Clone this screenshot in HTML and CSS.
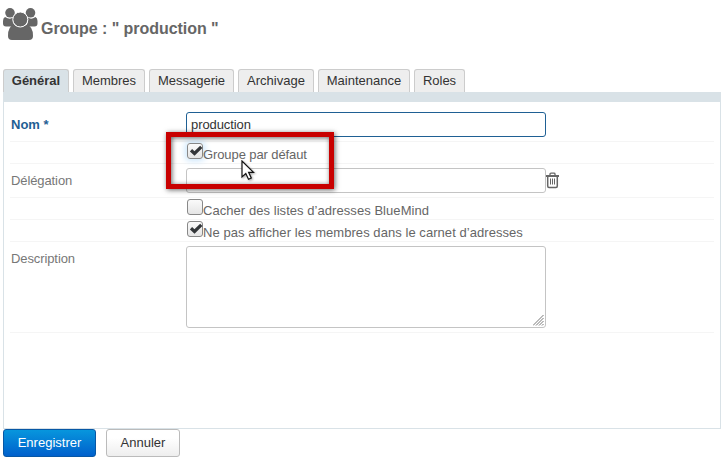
FILE: index.html
```html
<!DOCTYPE html>
<html lang="fr">
<head>
<meta charset="utf-8">
<title>Groupe</title>
<link rel="stylesheet" href="styles.css">
</head>
<body>
<header class="header">
  <svg class="group-icon" width="35" height="33" viewBox="0 0 35 33" fill="#666">
    <circle cx="7" cy="4.800" r="4.800"/><circle cx="27.500" cy="4.800" r="4.800"/>
    <path d="M2 9 Q7 12 10 9.500 Q9 15 13 18.500 H3 Q0 18.500 0 15.500 V13 Q0 10 2 9Z"/>
    <path d="M32.500 9 Q28 12 25 9.500 Q26 15 22 18.500 H31.500 Q34.500 18.500 34.500 15.500 V13 Q34.500 10 32.500 9Z"/>
    <path d="M11 17 Q17.300 21 23.500 17 Q30 18 30 28 Q30 32 26 32 H9 Q5 32 5 28 Q5 18 11 17Z"/>
    <circle cx="17.300" cy="11.500" r="7.500" stroke="#fff" stroke-width="1"/>
  </svg>
  <h1 class="title">Groupe : " production "</h1>
</header>
<nav class="tabs">
  <a class="tab tab-general active">Général</a>
  <a class="tab tab-membres">Membres</a>
  <a class="tab tab-messagerie">Messagerie</a>
  <a class="tab tab-archivage">Archivage</a>
  <a class="tab tab-maintenance">Maintenance</a>
  <a class="tab tab-roles">Roles</a>
</nav>
<main class="panel">
  <div class="row row-name"><span class="label required">Nom *</span><div class="field focused">production</div></div>
  <div class="row row-check"><span class="label"></span><span class="check glow"><svg width="16" height="16" viewBox="0 0 16 16"><path d="M4 7.300 L7.500 10.500 L14.300 3.800" fill="none" stroke="#333639" stroke-width="3.200"/></svg></span><span class="check-text default-text">Groupe par défaut</span></div>
  <div class="row row-delegation"><span class="label">Délégation</span><div class="field"></div>
    <svg class="trash" width="13" height="17" viewBox="0 0 13 17" fill="none" stroke="#666"><path d="M0 4H13" stroke-width="2"/><path d="M4 3V2Q4 1.200 5 1.200H8Q9 1.200 9 2V3" stroke-width="1.300"/><path d="M1.700 4V14Q1.700 15.500 3 15.500H10Q11.300 15.500 11.300 14V4" stroke-width="1.500"/><path d="M4.500 6.500V12.500M6.500 6.500V12.500M8.500 6.500V12.500"/></svg>
  </div>
  <div class="row row-check"><span class="label"></span><span class="check"></span><span class="check-text">Cacher des listes d’adresses BlueMind</span></div>
  <div class="row row-check"><span class="label"></span><span class="check"><svg width="16" height="16" viewBox="0 0 16 16"><path d="M4 7.300 L7.500 10.500 L14.300 3.800" fill="none" stroke="#333639" stroke-width="3.200"/></svg></span><span class="check-text">Ne pas afficher les membres dans le carnet d’adresses</span></div>
  <div class="row row-description"><span class="label">Description</span><div class="field area"><svg width="11" height="11" viewBox="0 0 11 11" stroke="#777" fill="none"><path d="M0 10.500L10.500 0M3 10.500L10.500 3M6 10.500L10.500 6M9 10.500L10.500 9"/></svg></div></div>
</main>
<footer class="actions"><button class="button primary">Enregistrer</button><button class="button cancel">Annuler</button></footer>
<div class="highlight"></div>
<svg class="cursor" width="14" height="22" viewBox="0 0 14 22"><path d="M1 1V17L4.800 13.500L7.500 19.300L10.300 18L7.600 12.300H12.500Z" fill="#fff" stroke="#111" stroke-width="1.200"/></svg>
</body>
</html>
```

FILE: styles.css
```css
* { box-sizing: border-box; }
body {
  margin: 0;
  width: 721px;
  height: 463px;
  overflow: hidden;
  position: relative;
  background: #fff;
  color: #333;
  font: 13px/18px "Liberation Sans", Arial, sans-serif;
}
.header { display: flex; height: 69px; padding: 8px 0 0 3px; }
.group-icon { flex: none; }
.title { margin: 11px 0 0 3px; font-size: 16px; line-height: 20px; color: #666; white-space: nowrap; letter-spacing: -.05px; }
.tabs { display: flex; gap: 4px; height: 23px; padding-left: 3px; }
.tab {
  height: 23px;
  border: 1px solid #ccc;
  border-bottom: 0;
  border-radius: 3px 3px 0 0;
  background: #eee;
  line-height: 21px;
  text-align: center;
}
.tab.active { background: #d9e2e7; font-weight: bold; }
.tab-general { width: 66px; }
.tab-membres { width: 72px; }
.tab-messagerie { width: 85px; }
.tab-archivage { width: 76px; }
.tab-maintenance { width: 92px; }
.tab-roles { width: 51px; }
.panel {
  height: 337px;
  margin-left: 3px;
  padding: 0 6px;
  border: 1px solid #d9e2e7;
  border-top-width: 10px;
}
.row { display: flex; align-items: flex-start; border-bottom: 1px solid #f5f5f5; }
.row-name { height: 40px; padding-top: 10px; }
.row-check { height: 22px; padding-top: 1px; }
.row-delegation { height: 34px; padding-top: 4px; }
.row-description { height: 91px; padding-top: 4px; }
.label { flex: none; width: 176px; padding: 4px 0 0 1px; color: #777; letter-spacing: -.1px; }
.label.required { color: #1f6094; font-weight: bold; letter-spacing: 0; }
.field { width: 360px; height: 25px; padding: 3px 4px; border: 1px solid #c4c4c4; border-radius: 3px; background: #fff; }
.field.focused { border-color: #1f6094; letter-spacing: -.08px; }
.field.area { height: 82px; display: flex; align-items: flex-end; justify-content: flex-end; padding: 1px; }
.check { flex: none; width: 16px; height: 16px; margin-left: 1px; border: 1px solid #888; border-radius: 3px; background: linear-gradient(#fafafa, #e5e5e5); }
.check svg { display: block; margin: -1px; }
.check.glow { box-shadow: 0 0 6px 2px #cce6fb; }
.check-text { padding-top: 3px; color: #666; white-space: nowrap; letter-spacing: .055px; }
.default-text { letter-spacing: -.1px; }
.trash { margin-top: 4px; }
.actions { display: flex; gap: 10px; padding-left: 3px; }
.button { height: 28px; padding: 0; border-radius: 3px; font: inherit; }
.primary { width: 93px; border: 1px solid #0757a5; color: #fff; background: linear-gradient(#0796dd, #0060cc); }
.cancel { width: 74px; border: 1px solid #bbb; color: #333; background: linear-gradient(#fff 30%, #eee); }
.highlight { position: absolute; left: 166px; top: 132px; width: 168px; height: 57px; border: 5px solid #c80000; box-shadow: 1px 1px 5px rgba(0,0,0,.6), inset 1px 1px 5px rgba(0,0,0,.6); }
.cursor { position: absolute; left: 240.5px; top: 160px; filter: drop-shadow(1px 1px 1px rgba(0,0,0,.35)); }
```
